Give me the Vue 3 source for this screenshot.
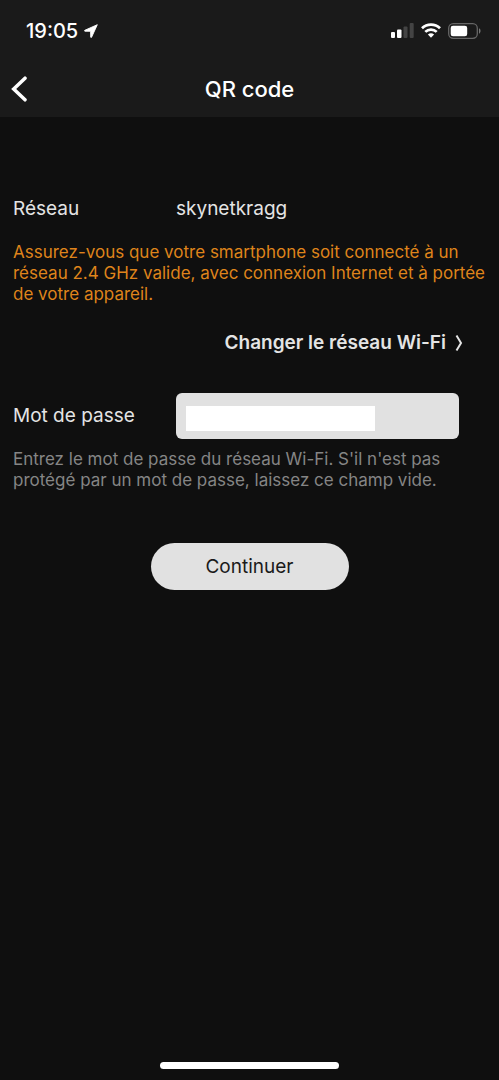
<script setup>
import { ref } from 'vue'

const network = 'skynetkragg'
const password = ref('')
</script>

<template>
  <div class="screen">
    <header class="top">
      <div class="status">
        <div class="clock">
          <span>19:05</span>
          <svg width="14" height="14" viewBox="0 0 14 14" aria-hidden="true">
            <path d="M13.3.7.8 6.3c-.5.3-.4.9.2.9l5.6.1.1 5.7c0 .6.7.7.9.2z" fill="#fff" stroke="#fff" stroke-width=".9" stroke-linejoin="round" />
          </svg>
        </div>
        <div class="indicators">
          <svg width="23" height="15" viewBox="0 0 23 15" aria-hidden="true">
            <rect x="0" y="9" width="4" height="6" rx="1" fill="#fff" />
            <rect x="6" y="6.500" width="4.500" height="8.500" rx="1" fill="#fff" />
            <rect x="12.500" y="3.500" width="4" height="11.500" rx="1" fill="#444" />
            <rect x="18.700" y="0" width="4" height="15" rx="1" fill="#444" />
          </svg>
          <svg width="20" height="15" viewBox="0 0 20 15" aria-hidden="true">
            <g fill="none" stroke="#fff" stroke-width="2.700">
              <path d="M1 5.300a12.800 12.800 0 0 1 18 0" />
              <path d="M4.300 8.900a8.100 8.100 0 0 1 11.400 0" />
            </g>
            <path d="M10 14.700 6.900 11.600a4.500 4.500 0 0 1 6.200 0z" fill="#fff" />
          </svg>
          <svg width="33" height="16" viewBox="0 0 33 16" aria-hidden="true">
            <rect x=".7" y=".7" width="28.600" height="14.600" rx="4.500" fill="none" stroke="#666" stroke-width="1.300" />
            <rect x="2.700" y="2.700" width="16.500" height="10.600" rx="2.300" fill="#fff" />
            <path d="M31 5.300c2 .8 2 4.600 0 5.400z" fill="#777" />
          </svg>
        </div>
      </div>
      <nav class="nav">
        <button class="back" type="button" aria-label="Retour">
          <svg width="16" height="26" viewBox="0 0 16 26" aria-hidden="true">
            <path d="M14 2.200 2.700 13 14 23.800" fill="none" stroke="#fff" stroke-width="3.500" stroke-linecap="round" stroke-linejoin="miter" />
          </svg>
        </button>
        <h1>QR code</h1>
      </nav>
    </header>

    <main class="content">
      <div class="row">
        <span class="label">Réseau</span>
        <span class="value">{{ network }}</span>
      </div>
      <p class="note warning">
        Assurez-vous que votre smartphone soit connecté à un réseau 2.4 GHz valide, avec connexion Internet et à portée de votre appareil.
      </p>
      <a class="change" href="#">
        Changer le réseau Wi-Fi
        <svg width="8" height="18" viewBox="0 0 8 18" aria-hidden="true">
          <path d="M1.500 1.500 6 9l-4.500 7.500" fill="none" stroke="#e4e4e4" stroke-width="2" />
        </svg>
      </a>
      <div class="row password">
        <label class="label" for="password">Mot de passe</label>
        <div class="field">
          <input id="password" v-model="password" type="password" />
          <span class="mask"></span>
        </div>
      </div>
      <p class="note hint">
        Entrez le mot de passe du réseau Wi-Fi. S'il n'est pas protégé par un mot de passe, laissez ce champ vide.
      </p>
      <button class="continue" type="button">Continuer</button>
    </main>

    <div class="home"></div>
  </div>
</template>

<style>
body {
  background: #0f0f0f;
}
</style>

<style scoped>
.screen {
  box-sizing: border-box;
  min-height: 100vh;
  display: flex;
  flex-direction: column;
  background: #0f0f0f;
  color: #e4e4e4;
  font-family: Inter, "Liberation Sans", sans-serif;
  font-size: 19px;
}
.top {
  background: #1a1a1a;
  color: #fff;
}
.status {
  height: 61px;
  padding: 0 18px 0 26px;
  display: flex;
  align-items: center;
  justify-content: space-between;
}
.clock {
  display: flex;
  align-items: center;
  gap: 6px;
  font-size: 20px;
  font-weight: 500;
}
.indicators {
  display: flex;
  align-items: center;
  gap: 7px;
}
.nav {
  height: 56px;
  display: grid;
  grid-template-columns: 48px 1fr 48px;
  align-items: center;
}
.back {
  height: 48px;
  padding: 0 0 0 11px;
  border: 0;
  background: none;
  display: flex;
  align-items: center;
  cursor: pointer;
}
h1 {
  margin: 0;
  text-align: center;
  font-size: 22px;
  font-weight: 500;
  line-height: 28px;
}
.content {
  display: flex;
  flex-direction: column;
  padding: 80px 13px 0;
}
.row {
  display: grid;
  grid-template-columns: 163px 1fr;
  align-items: center;
  line-height: 24px;
}
.note {
  margin: 0;
  font-size: 17px;
  line-height: 21px;
}
.warning {
  margin-top: 21px;
  color: #df841b;
}
.change {
  align-self: flex-end;
  display: flex;
  align-items: center;
  gap: 9px;
  margin: 26px 23px 0 0;
  color: inherit;
  font-weight: 600;
  line-height: 24px;
  text-decoration: none;
}
.password {
  margin-top: 38px;
}
.field {
  position: relative;
  margin-right: 27px;
}
input {
  display: block;
  box-sizing: border-box;
  width: 100%;
  height: 46px;
  padding: 0 10px;
  border: 0;
  border-radius: 6px;
  background: #e1e1e1;
  font: inherit;
}
.mask {
  position: absolute;
  top: 13px;
  bottom: 8px;
  left: 10px;
  right: 84px;
  background: #fff;
  pointer-events: none;
}
.hint {
  margin-top: 10px;
  color: #858585;
}
.continue {
  align-self: center;
  width: 198px;
  height: 47px;
  margin-top: 52px;
  border: 0;
  border-radius: 24px;
  background: #e1e1e1;
  color: #1a1a1a;
  font: inherit;
  cursor: pointer;
}
.home {
  width: 179px;
  height: 7px;
  margin: auto auto 11px;
  border-radius: 4px;
  background: #fff;
}
</style>
